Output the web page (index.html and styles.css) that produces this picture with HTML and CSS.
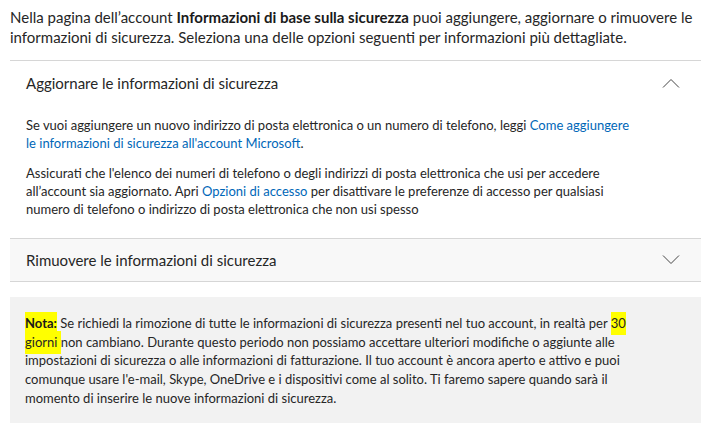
FILE: index.html
```html
<!DOCTYPE html>
<html lang="it">
<head>
<meta charset="utf-8">
<link rel="stylesheet" href="styles.css">
</head>
<body>
<p class="intro">Nella pagina dell’account <b>Informazioni di base sulla sicurezza</b> puoi aggiungere, aggiornare o rimuovere le<br>informazioni di sicurezza. Seleziona una delle opzioni seguenti per informazioni più dettagliate.</p>

<div class="accordion">
  <section class="item open">
    <div class="head">
      <span>Aggiornare le informazioni di sicurezza</span>
      <svg class="chev" width="18" height="10" viewBox="0 0 18 10"><path d="M1 9.5 L9 1.5 L17 9.5" fill="none" stroke="#444" stroke-width="1"/></svg>
    </div>
    <div class="body">
      <p>Se vuoi aggiungere un nuovo indirizzo di posta elettronica o un numero di telefono, leggi <a href="#">Come aggiungere<br>le informazioni di sicurezza all'account Microsoft</a>.</p>
      <p>Assicurati che l'elenco dei numeri di telefono o degli indirizzi di posta elettronica che usi per accedere<br>all’account sia aggiornato. Apri <a href="#">Opzioni di accesso</a> per disattivare le preferenze di accesso per qualsiasi<br>numero di telefono o indirizzo di posta elettronica che non usi spesso</p>
    </div>
  </section>
  <section class="item closed">
    <div class="head">
      <span>Rimuovere le informazioni di sicurezza</span>
      <svg class="chev" width="18" height="10" viewBox="0 0 18 10"><path d="M1 0.5 L9 8.5 L17 0.5" fill="none" stroke="#444" stroke-width="1"/></svg>
    </div>
  </section>
</div>

<div class="note">
  <p><span class="hl"><b>Nota:</b></span> Se richiedi la rimozione di tutte le informazioni di sicurezza presenti nel tuo account, in realtà per <span class="hl">30</span><br><span class="hl">giorni </span>non cambiano. Durante questo periodo non possiamo accettare ulteriori modifiche o aggiunte alle<br>impostazioni di sicurezza o alle informazioni di fatturazione. Il tuo account è ancora aperto e attivo e puoi<br>comunque usare l'e-mail, Skype, OneDrive e i dispositivi come al solito. Ti faremo sapere quando sarà il<br>momento di inserire le nuove informazioni di sicurezza.</p>
</div>
</body>
</html>
```

FILE: styles.css
```css
html, body {
  margin: 0;
  background: #fff;
}
body {
  padding: 7px 5px 0 10px;
  font-family: Lato, "Liberation Sans", sans-serif;
  color: #262626;
}
b { font-weight: 700; color: #1a1a1a; }
a { color: #0067b8; text-decoration: none; }
p { margin: 0; }

.intro {
  font-size: 15px;
  line-height: 20px;
  white-space: nowrap;
  margin-bottom: 13px;
}

.accordion {
  width: 691px;
}
.item {
  border-top: 1px solid #d6d6d6;
}
.item.closed {
  background: #f8f8f8;
  border-bottom: 1px solid #d6d6d6;
}
.head {
  display: flex;
  align-items: center;
  justify-content: space-between;
  height: 43px;
  padding: 0 21px 0 16px;
  font-size: 15px;
}
.item.closed .head { height: 42px; }
.chev { display: block; }

.body {
  padding: 12px 16px 20px 16px;
  font-size: 13px;
  line-height: 18px;
  white-space: nowrap;
  display: flex;
  flex-direction: column;
  gap: 12px;
}

.note {
  margin-top: 15px;
  width: 691px;
  height: 126px;
  box-sizing: border-box;
  background: #f2f2f2;
  padding: 17px 15px 0 15px;
  font-size: 13px;
  line-height: 18.7px;
  white-space: nowrap;
}
.hl {
  background: #ffff00;
  padding: 3px 0 4px;
}
```
